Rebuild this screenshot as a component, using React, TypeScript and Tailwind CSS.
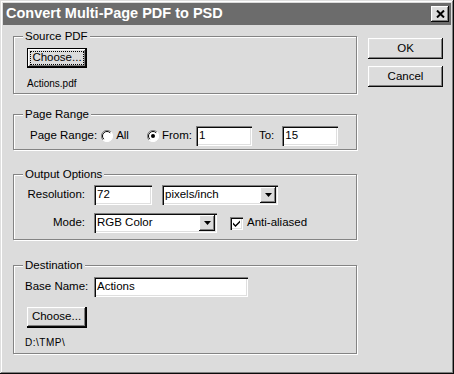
import type { ReactNode } from "react";

// Win95-style bevels
const raised =
  "shadow-[inset_-1px_-1px_0_#0a0a0a,inset_1px_1px_0_#ffffff,inset_-2px_-2px_0_#808080,inset_2px_2px_0_#dfdfdf]";
const sunken =
  "shadow-[inset_1px_1px_0_#808080,inset_2px_2px_0_#0a0a0a,inset_-1px_-1px_0_#ffffff,inset_-2px_-2px_0_#dfdfdf]";

function Group({ title, className, children }: { title: string; className: string; children: ReactNode }) {
  return (
    <div className={`relative border border-[#848484] shadow-[inset_1px_1px_0_#ffffff,1px_1px_0_#ffffff] ${className}`}>
      <span className="absolute left-[9px] top-[-8px] bg-[#dcdcdc] px-[2px] text-[11.5px] leading-[14px]">{title}</span>
      {children}
    </div>
  );
}

function TextField({ value, className }: { value: string; className: string }) {
  return (
    <div className={`flex h-[20px] items-center bg-white pl-[3px] text-[11.5px] ${sunken} ${className}`}>{value}</div>
  );
}

function Select({ value, className }: { value: string; className: string }) {
  return (
    <div className={`flex h-[20px] items-center justify-between bg-white pl-[3px] pr-[2px] text-[11.5px] ${sunken} ${className}`}>
      <span>{value}</span>
      <span className={`flex h-[16px] w-[16px] items-center justify-center bg-[#dcdcdc] ${raised}`}>
        <svg width="7" height="4" viewBox="0 0 7 4">
          <path d="M0 0h7L3.5 4z" fill="#000" />
        </svg>
      </span>
    </div>
  );
}

function Radio({ checked }: { checked?: boolean }) {
  return (
    <svg width="12" height="12" viewBox="0 0 12 12">
      <circle cx="6" cy="6" r="5.5" fill="#fff" />
      <path d="M10 2A5.5 5.5 0 0 0 2 10" fill="none" stroke="#808080" strokeWidth="1" />
      <path d="M9.2 2.8A4.5 4.5 0 0 0 2.8 9.2" fill="none" stroke="#000" strokeWidth="1" />
      <path d="M2 10A5.5 5.5 0 0 0 10 2" fill="none" stroke="#fff" strokeWidth="1" />
      {checked && <circle cx="6" cy="6" r="2" fill="#000" />}
    </svg>
  );
}

function Button({ label, className }: { label: string; className: string }) {
  return (
    <div className={`flex items-center justify-center bg-[#dcdcdc] text-[11.5px] ${raised} ${className}`}>{label}</div>
  );
}

export default function App() {
  return (
    <div className="h-[374px] w-[454px] bg-[#dcdcdc] p-[3px] font-['Liberation_Sans',Arial,sans-serif] text-black shadow-[inset_-1px_-1px_0_#0a0a0a,inset_1px_1px_0_#dfdfdf,inset_-2px_-2px_0_#808080,inset_2px_2px_0_#ffffff]">
      <div className="flex h-[22px] items-center justify-between bg-[#6c6c6c] pl-[3px] pr-[2px]">
        <span className="text-[14.5px] font-bold text-white">Convert Multi-Page PDF to PSD</span>
        <div className={`flex h-[16px] w-[18px] items-center justify-center bg-[#dcdcdc] ${raised}`}>
          <svg width="9" height="8" viewBox="0 0 9 8">
            <path d="M1 0.5l7 7M8 0.5l-7 7" stroke="#000" strokeWidth="2" />
          </svg>
        </div>
      </div>

      <div className="flex gap-[11px] pl-[10px] pt-[11px]">
        <div className="flex w-[344px] flex-col">
          <Group title="Source PDF" className="h-[58px] px-[13px] pt-[11px]">
            <div className="flex h-[20px] w-[60px] border border-black">
              <div className={`flex flex-1 items-center justify-center p-[3px] ${raised}`}>
                <span className="flex h-full w-full items-center justify-center outline outline-1 outline-dotted outline-black text-[11.5px]">
                  Choose...
                </span>
              </div>
            </div>
            <div className="mt-[10px] text-[10px] leading-[12px]">Actions.pdf</div>
          </Group>

          <Group title="Page Range" className="mt-[20px] h-[36px] pl-[16px] pt-[11px]">
            <div className="flex h-[20px] items-center text-[11.5px]">
              <span>Page Range:</span>
              <span className="ml-[4px] flex"><Radio /></span>
              <span className="ml-[3px]">All</span>
              <span className="ml-[18px] flex"><Radio checked /></span>
              <span className="ml-[3px]">From:</span>
              <TextField value="1" className="ml-[4px] w-[56px]" />
              <span className="ml-[7px]">To:</span>
              <TextField value="15" className="ml-[8px] w-[56px]" />
            </div>
          </Group>

          <Group title="Output Options" className="mt-[24px] h-[66px] pt-[10px]">
            <div className="flex h-[20px] items-center text-[11.5px]">
              <span className="w-[71px] text-right">Resolution:</span>
              <TextField value="72" className="ml-[9px] w-[58px]" />
              <Select value="pixels/inch" className="ml-[10px] w-[116px]" />
            </div>
            <div className="mt-[8px] flex h-[20px] items-center text-[11.5px]">
              <span className="w-[71px] text-right">Mode:</span>
              <Select value="RGB Color" className="ml-[9px] w-[123px]" />
              <div className={`ml-[13px] flex h-[13px] w-[13px] items-center justify-center bg-white ${sunken}`}>
                <svg width="7" height="7" viewBox="0 0 7 7">
                  <path d="M0 2.5l2.5 2.5L7 0.5v2L2.5 7 0 4.5z" fill="#000" />
                </svg>
              </div>
              <span className="ml-[4px]">Anti-aliased</span>
            </div>
          </Group>

          <Group title="Destination" className="mt-[25px] h-[89px] pl-[11px] pt-[11px]">
            <div className="flex h-[20px] items-center text-[11.5px]">
              <span className="w-[69px]">Base Name:</span>
              <TextField value="Actions" className="w-[154px]" />
            </div>
            <div className="ml-[2px] mt-[10px] flex h-[21px] w-[60px] border-b border-r border-black">
              <Button label="Choose..." className="flex-1" />
            </div>
            <div className="mt-[9px] text-[10px] leading-[12px] tracking-[0.5px]">D:\TMP\</div>
          </Group>
        </div>

        <div className="flex w-[75px] flex-col gap-[7px] pt-[2px]">
          <Button label="OK" className="h-[21px]" />
          <Button label="Cancel" className="h-[21px]" />
        </div>
      </div>
    </div>
  );
}
